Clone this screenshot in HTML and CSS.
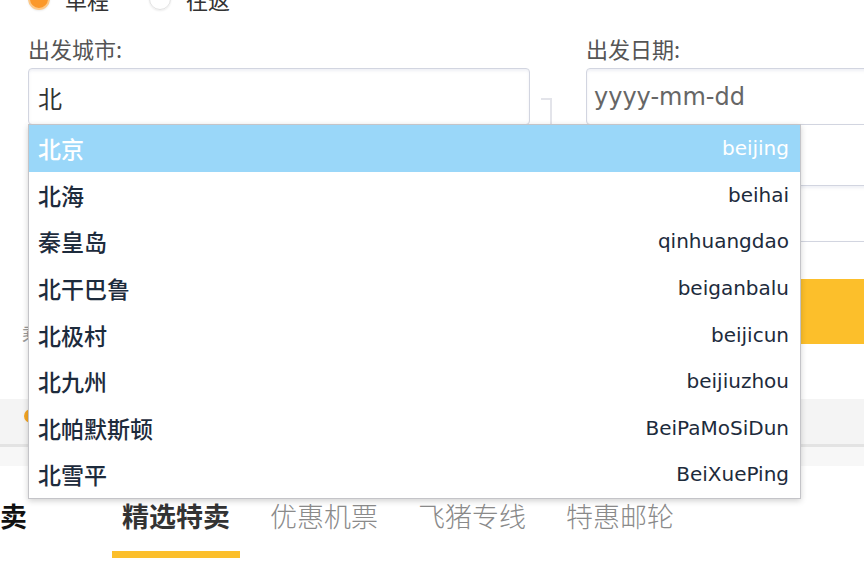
FILE: index.html
```html
<!DOCTYPE html>
<html lang="zh-CN">
<head>
    <meta charset="UTF-8">
    <meta name="viewport" content="width=device-width, initial-scale=1.0">
    <title>机票搜索</title>
    <link rel="stylesheet" href="styles.css">
</head>
<body>
    <div class="page">
        <div class="trip-row">
            <label class="radio"><span class="dot on"></span>单程</label>
            <label class="radio"><span class="dot"></span>往返</label>
        </div>

        <div class="form">
            <div class="col col-city">
                <div class="label">出发城市:</div>
                <div class="input-wrap">
                    <div class="input value">北</div>

                    <!-- city suggestions -->
                    <ul class="suggest">
                        <li class="active"><span class="cn">北京</span><span class="py">beijing</span></li>
                        <li><span class="cn">北海</span><span class="py">beihai</span></li>
                        <li><span class="cn">秦皇岛</span><span class="py">qinhuangdao</span></li>
                        <li><span class="cn">北干巴鲁</span><span class="py">beiganbalu</span></li>
                        <li><span class="cn">北极村</span><span class="py">beijicun</span></li>
                        <li><span class="cn">北九州</span><span class="py">beijiuzhou</span></li>
                        <li><span class="cn">北帕默斯顿</span><span class="py">BeiPaMoSiDun</span></li>
                        <li><span class="cn">北雪平</span><span class="py">BeiXuePing</span></li>
                    </ul>
                </div>
                <div class="label next">到达城市:</div>
                <div class="input"></div>
                <div class="note">乘客须知</div>
            </div>

            <div class="link"></div>

            <div class="col col-date">
                <div class="label">出发日期:</div>
                <div class="input placeholder">yyyy-mm-dd</div>
                <div class="label next">返回日期:</div>
                <div class="input"></div>
                <div class="search-btn">搜索</div>
            </div>
        </div>

        <div class="band">
            <span class="band-icon"></span>
        </div>
        <div class="band-foot"></div>

        <div class="tabs">
            <div class="title">特卖</div>
            <ul class="tab-list">
                <li class="tab active">精选特卖</li>
                <li class="tab">优惠机票</li>
                <li class="tab">飞猪专线</li>
                <li class="tab">特惠邮轮</li>
            </ul>
        </div>
    </div>
</body>
</html>
```

FILE: styles.css
```css
* {
    margin: 0;
    padding: 0;
    box-sizing: border-box;
}

body {
    background: #fff;
    font-family: "Noto Sans CJK SC", "Noto Sans", sans-serif;
    color: #333;
}

.page {
    width: 864px;
    height: 562px;
    overflow: hidden;
}

/* trip type */
.trip-row {
    display: flex;
    align-items: center;
    height: 24px;
    margin-top: -13px;
    padding-left: 28px;
    font-size: 22px;
    color: #333;
}

.radio {
    display: flex;
    align-items: center;
    margin-right: 40px;
}

.dot {
    width: 22px;
    height: 22px;
    border-radius: 50%;
    margin-right: 15px;
    border: 1px solid #e2e2e2;
    box-shadow: 0 1px 2px rgba(0,0,0,0.08);
}

.dot.on {
    background: #fb982a;
    border: 2px solid #fdc887;
}

/* form */
.form {
    display: flex;
    align-items: flex-start;
    padding: 24px 0 0 28px;
}

.col-city {
    width: 502px;
    flex-shrink: 0;
}

.col-date {
    width: 320px;
    flex-shrink: 0;
}

.label {
    font-size: 22px;
    line-height: 26px;
    color: #555;
    margin-bottom: 7px;
}

.label.next {
    margin-top: 27px;
}

.input {
    height: 57px;
    border: 1px solid #d2d5e0;
    border-radius: 4px;
    box-shadow: inset 0 2px 3px rgba(120,130,170,0.12);
    padding-left: 9px;
    font-size: 24px;
    line-height: 57px;
}

.input.value {
    color: #333;
}

.input.placeholder {
    font-family: "DejaVu Sans", sans-serif;
    color: #666;
    padding-left: 7px;
}

.input-wrap {
    position: relative;
}

.link {
    width: 11px;
    height: 27px;
    margin: 63px 34px 0 11px;
    border-top: 2px solid #e3e4ea;
    border-right: 2px solid #e3e4ea;
    flex-shrink: 0;
}

.note {
    margin: 79px 0 0 -6px;
    font-size: 18px;
    line-height: 24px;
    color: #999;
}

.search-btn {
    margin-top: 37px;
    height: 65px;
    background: #fcbf2b;
    border-radius: 4px;
    color: #fff;
    font-size: 24px;
    line-height: 65px;
    text-align: center;
}

/* suggestion list */
.suggest {
    position: absolute;
    top: 56px;
    left: 0;
    width: 773px;
    list-style: none;
    background: #fff;
    border: 1px solid #c4c4c8;
    box-shadow: 0 2px 6px rgba(0,0,0,0.18);
    z-index: 5;
}

.suggest li {
    display: flex;
    justify-content: space-between;
    align-items: center;
    height: 46.6px;
    padding: 0 11px 0 9px;
    color: #1d2b3c;
}

.suggest li.active {
    background: #9ad7f9;
    color: #fff;
}

.cn {
    font-size: 23px;
    font-weight: 500;
}

.py {
    font-family: "DejaVu Sans", sans-serif;
    font-size: 20px;
}

/* grey band */
.band {
    margin-top: 54px;
    height: 48px;
    background: #f4f4f4;
    border-bottom: 3px solid #e3e3e3;
    padding: 10px 0 0 24px;
}

.band-icon {
    display: block;
    width: 14px;
    height: 14px;
    border-radius: 50%;
    background: #f5a623;
}

.band-foot {
    height: 19px;
    background: #f7f7f7;
}

/* tabs */
.tabs {
    display: flex;
    align-items: flex-start;
    padding-top: 32px;
}

.title {
    margin-left: -27px;
    font-size: 27px;
    line-height: 36px;
    font-weight: 700;
    color: #111;
}

.tab-list {
    display: flex;
    gap: 20px;
    list-style: none;
    margin-left: 85px;
}

.tab {
    padding: 0 10px 17px;
    font-size: 27px;
    line-height: 36px;
    color: #8a8a8a;
    font-weight: 300;
    border-bottom: 7px solid transparent;
}

.tab.active {
    color: #333;
    font-weight: 700;
    border-bottom-color: #fcbf2b;
}
```
